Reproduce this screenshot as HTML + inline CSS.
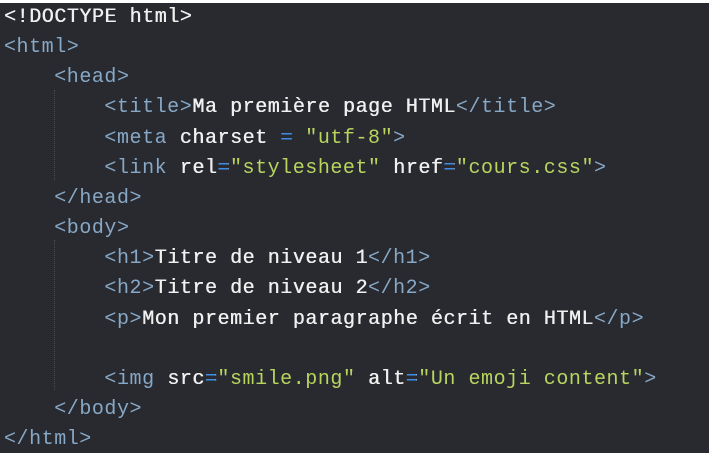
<!DOCTYPE html>
<html><head><meta charset="utf-8"><style>
html,body{margin:0;padding:0;}
body{width:709px;height:453px;background:#fff;overflow:hidden;}
#c{position:absolute;top:3px;left:0;width:709px;height:450px;background:#282a30;}
pre{margin:0;position:absolute;top:0px;left:4px;font-family:"Liberation Mono",monospace;font-size:20px;line-height:30.15px;color:#f0f0f0;letter-spacing:0.55px;text-shadow:0.4px 0 0 #f0f0f0;}
.t{color:#87a8c6;text-shadow:none}
.s{color:#b8d55e;text-shadow:none}
.e{color:#3d8de6}
.g{position:absolute;width:0;border-left:1px dotted #4a4c52}
</style></head><body><div id="c">
<div class="g" style="left:54px;top:87px;height:90px"></div>
<div class="g" style="left:54px;top:237px;height:150px"></div>
<pre><span>&lt;!DOCTYPE html&gt;</span>
<span class="t">&lt;html&gt;</span>
    <span class="t">&lt;head&gt;</span>
        <span class="t">&lt;title&gt;</span>Ma première page HTML<span class="t">&lt;/title&gt;</span>
        <span class="t">&lt;meta</span> charset <span class="e">=</span> <span class="s">"utf-8"</span><span class="t">&gt;</span>
        <span class="t">&lt;link</span> rel<span class="e">=</span><span class="s">"stylesheet"</span> href<span class="e">=</span><span class="s">"cours.css"</span><span class="t">&gt;</span>
    <span class="t">&lt;/head&gt;</span>
    <span class="t">&lt;body&gt;</span>
        <span class="t">&lt;h1&gt;</span>Titre de niveau 1<span class="t">&lt;/h1&gt;</span>
        <span class="t">&lt;h2&gt;</span>Titre de niveau 2<span class="t">&lt;/h2&gt;</span>
        <span class="t">&lt;p&gt;</span>Mon premier paragraphe écrit en HTML<span class="t">&lt;/p&gt;</span>

        <span class="t">&lt;img</span> src<span class="e">=</span><span class="s">"smile.png"</span> alt<span class="e">=</span><span class="s">"Un emoji content"</span><span class="t">&gt;</span>
    <span class="t">&lt;/body&gt;</span>
<span class="t">&lt;/html&gt;</span></pre>
</div></body></html>
